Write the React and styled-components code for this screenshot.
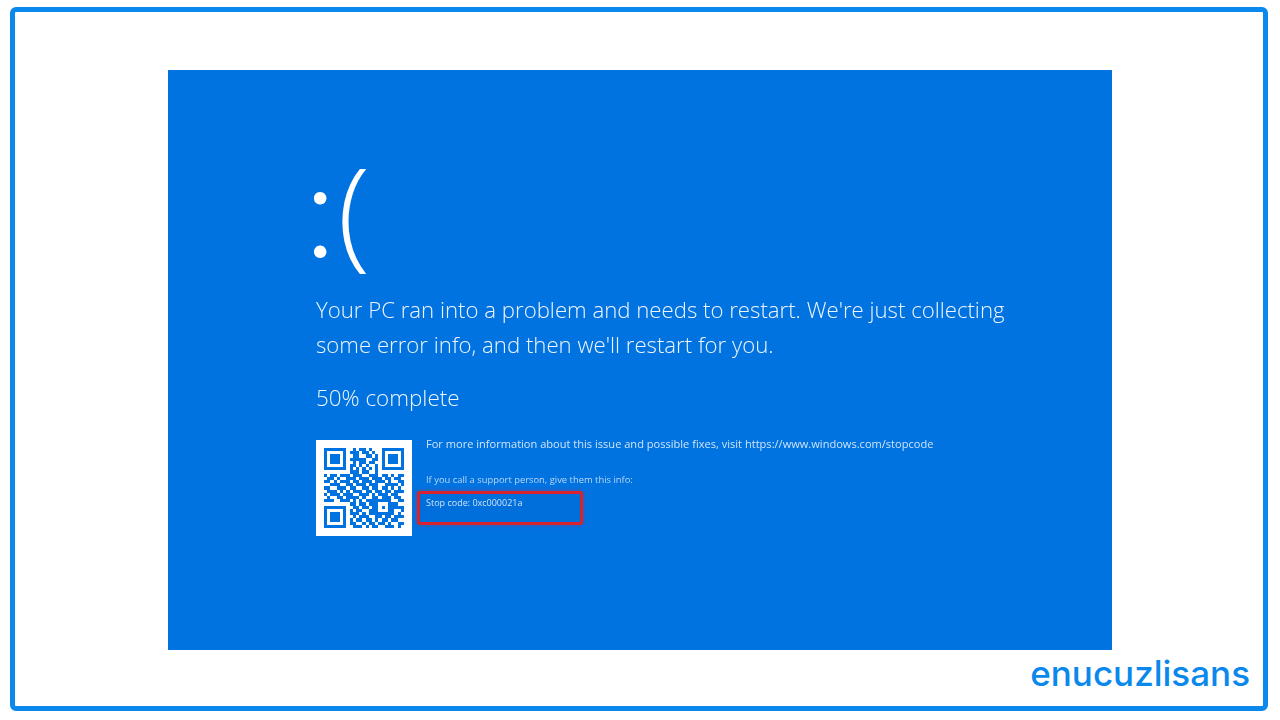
import React from "react";
import styled, { createGlobalStyle } from "styled-components";

const QR_ROWS = [
  "1111111001011010001111111",
  "1000001011101101001000001",
  "1011101001100110101011101",
  "1011101011111001101011101",
  "1011101001011011001011101",
  "1000001011010100101000001",
  "1111111010101010101111111",
  "0000000011101100100000000",
  "1011011101110011101101011",
  "0110100111011101110110110",
  "1101011101101110111010011",
  "0011100110111011100111101",
  "1100111011001101101101010",
  "0111010101110110110110111",
  "1011101110011101011101100",
  "0100110111101001101110110",
  "1110011101010111111110011",
  "0000000011011011100011100",
  "1111111001101101101011111",
  "1000001010110011100011001",
  "1011101011101011111111010",
  "1011101001011100110110111",
  "1011101010110110101101100",
  "1000001011001011011010011",
  "1111111001110101100111010",
];

const GlobalStyle = createGlobalStyle`
  html, body {
    margin: 0;
    padding: 0;
    background: #ffffff;
  }
`;

const Page = styled.div`
  width: 1280px;
  height: 720px;
  padding: 7px 12px 9px 10px;
  box-sizing: border-box;
  background: #ffffff;
`;

const Frame = styled.div`
  height: 100%;
  box-sizing: border-box;
  border: 5px solid #0a88ec;
  border-radius: 6px;
  padding-top: 58px;
  display: flex;
  flex-direction: column;
  align-items: center;
`;

const Screen = styled.main`
  width: 944px;
  height: 580px;
  margin-left: 2px;
  flex: none;
  box-sizing: border-box;
  padding: 90px 0 0 148px;
  background: #0073e0;
`;

const Content = styled.div`
  color: #eef5fd;
  font-family: "Open Sans", "Noto Sans", sans-serif;
  font-weight: 300;
  filter: blur(0.4px);
`;

const Smile = styled.div`
  height: 122px;
  margin: 0 0 10px -12px;
  display: flex;
  align-items: center;
  gap: 1px;
  color: #ffffff;
`;

const Colon = styled.span`
  font-family: Lato, "Open Sans", sans-serif;
  font-size: 135px;
  line-height: 122px;
  font-weight: 300;
  transform: translateY(-16px);
`;

const Paren = styled.span`
  font-size: 120px;
  line-height: 122px;
  font-weight: 300;
  transform: translateY(-12px);
`;

const Message = styled.p`
  margin: 0;
  font-size: 22.2px;
  line-height: 35px;
`;

const Progress = styled.p`
  margin: 18px 0 25px;
  font-size: 22.4px;
  line-height: 35px;
`;

const Details = styled.section`
  display: flex;
  gap: 14px;
  align-items: flex-start;
`;

const QrBox = styled.div`
  width: 96px;
  height: 96px;
  flex: none;
  background: #ffffff;
  display: flex;
  align-items: center;
  justify-content: center;
`;

const Info = styled.div`
  margin-top: -4px;
`;

const InfoLine = styled.div`
  font-size: 11.07px;
  line-height: 15px;
  font-weight: 400;
  color: #cfe3f9;
`;

const SupportLine = styled.div`
  margin-top: 23px;
  font-size: 9.4px;
  line-height: 12px;
  font-weight: 400;
  color: #b9d6f5;
`;

const StopBox = styled.div`
  margin: 5px 0 0 -9px;
  width: 166px;
  height: 34px;
  box-sizing: border-box;
  padding: 3px 0 0 6px;
  border: 3px solid #d8232c;
  border-radius: 3px;
  background: #006fdb;
  box-shadow: 0 0 4px rgba(190, 40, 90, 0.5);
  font-size: 9px;
  line-height: 12px;
  font-weight: 400;
  color: #cfe3f9;
`;

const Footer = styled.footer`
  align-self: stretch;
  display: flex;
  justify-content: flex-end;
  padding-right: 13px;
  margin-top: 1px;
`;

const Logo = styled.span`
  font-family: Inter, Lato, sans-serif;
  font-size: 35px;
  line-height: 44px;
  font-weight: 500;
  color: #0a88ec;
`;

function QrCode() {
  const cells = [];
  QR_ROWS.forEach((row, y) => {
    row.split("").forEach((c, x) => {
      if (c === "1") cells.push(<rect key={x + "-" + y} x={x} y={y} width="1" height="1" />);
    });
  });
  return (
    <svg width="80" height="80" viewBox="0 0 25 25" fill="#0073e0" shapeRendering="crispEdges">
      {cells}
    </svg>
  );
}

export default function App() {
  return (
    <Page>
      <GlobalStyle />
      <Frame>
        <Screen>
          <Content>
            <Smile>
              <Colon>:</Colon>
              <Paren>(</Paren>
            </Smile>
            <Message>
              Your PC ran into a problem and needs to restart. We're just collecting
              <br />
              some error info, and then we'll restart for you.
            </Message>
            <Progress>50% complete</Progress>
            <Details>
              <QrBox>
                <QrCode />
              </QrBox>
              <Info>
                <InfoLine>For more information about this issue and possible fixes, visit https://www.windows.com/stopcode</InfoLine>
                <SupportLine>If you call a support person, give them this info:</SupportLine>
                <StopBox>Stop code: 0xc000021a</StopBox>
              </Info>
            </Details>
          </Content>
        </Screen>
        <Footer>
          <Logo>enucuzlisans</Logo>
        </Footer>
      </Frame>
    </Page>
  );
}
